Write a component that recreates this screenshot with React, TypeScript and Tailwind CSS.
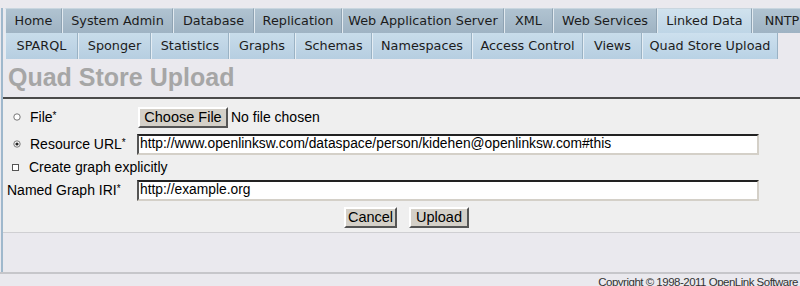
const topTabs = [
  { label: "Home", w: 57 },
  { label: "System Admin", w: 111 },
  { label: "Database", w: 81 },
  { label: "Replication", w: 88 },
  { label: "Web Application Server", w: 162 },
  { label: "XML", w: 49 },
  { label: "Web Services", w: 104 },
  { label: "Linked Data", w: 95, active: true },
  { label: "NNTP", w: 60 },
];

const subTabs = [
  { label: "SPARQL", w: 73 },
  { label: "Sponger", w: 73 },
  { label: "Statistics", w: 78 },
  { label: "Graphs", w: 66 },
  { label: "Schemas", w: 77 },
  { label: "Namespaces", w: 100 },
  { label: "Access Control", w: 111 },
  { label: "Views", w: 59 },
  { label: "Quad Store Upload", w: 136, active: true },
];

function Radio({ checked }: { checked?: boolean }) {
  return (
    <svg width="8" height="8" viewBox="0 0 8 8" className="shrink-0">
      <circle cx="4" cy="4" r="3.2" fill="#fff" stroke="#777" strokeWidth="1" />
      {checked && <circle cx="4" cy="4" r="1.6" fill="#222" />}
    </svg>
  );
}

function Field({ value }: { value: string }) {
  return (
    <div className="flex h-[21px] w-[622px] items-center border-2 border-t-[#222] border-l-[#555] border-r-[#d4d0c8] border-b-[#d4d0c8] bg-white px-[1px] text-[13.8px] leading-none text-black">
      {value}
    </div>
  );
}

function Btn({ label, w }: { label: string; w: number }) {
  return (
    <div
      style={{ width: w }}
      className="flex h-[21px] items-center justify-center border-2 border-t-white border-l-white border-r-[#555] border-b-[#555] bg-[#d4d0c8] text-[14.5px] leading-none text-black"
    >
      {label}
    </div>
  );
}

export default function App() {
  return (
    <div className="h-[286px] w-[800px] overflow-hidden bg-[#eae9ee] pt-2 font-['Liberation_Sans',Arial,sans-serif]">
      <div className="ml-px h-[264px] border-l-2 border-[#9fb8cc]">
        <div className="flex h-[25px] pl-[2px] font-['DejaVu_Sans',Verdana,sans-serif] text-[12.8px] text-[#1c1c1c]">
          {topTabs.map((t) => (
            <div
              key={t.label}
              style={{ width: t.w }}
              className={`flex shrink-0 items-center justify-center border-l border-r border-t border-l-[#e2eaf0] border-r-[#8fa3b3] border-t-[#c9d6df] ${
                t.active
                  ? "bg-gradient-to-b from-[#d0e2ee] to-[#bed5e6]"
                  : "bg-gradient-to-b from-[#b0c3d1] to-[#9fb3c3]"
              }`}
            >
              {t.label}
            </div>
          ))}
        </div>
        <div className="flex h-[26px] pl-[2px] font-['DejaVu_Sans',Verdana,sans-serif] text-[12.8px] text-[#1c1c1c]">
          {subTabs.map((t) => (
            <div
              key={t.label}
              style={{ width: t.w }}
              className={`flex shrink-0 items-center justify-center border-l border-r border-l-[#e4edf4] border-r-[#9ab2c4] ${
                t.active
                  ? "bg-gradient-to-b from-[#cde0ee] to-[#b9d2e5]"
                  : "bg-gradient-to-b from-[#c8dcea] to-[#b6cee1]"
              }`}
            >
              {t.label}
            </div>
          ))}
        </div>
        <div className="flex h-[38px] items-center pl-[5px] text-[25px] font-bold text-[#a6a6a6]">
          Quad Store Upload
        </div>
        <div className="h-[2px] bg-[#4a4a4a]" />
        <div className="border-b border-[#cfcfd2] bg-[#efefef] pt-[7px] pb-[4px] text-[14px] leading-none text-black">
          <div className="flex h-[22px] items-center">
            <div className="flex w-[135px] items-center gap-[9px] pl-[10px]">
              <Radio />
              <span>
                File<span className="relative -top-[3px] text-[10px]">*</span>
              </span>
            </div>
            <Btn label="Choose File" w={90} />
            <span className="ml-[3px]">No file chosen</span>
          </div>
          <div className="mt-[5px] flex h-[22px] items-center">
            <div className="flex w-[134px] items-center gap-[9px] pl-[10px]">
              <Radio checked />
              <span>
                Resource URL<span className="relative -top-[3px] text-[10px]">*</span>
              </span>
            </div>
            <Field value="http://www.openlinksw.com/dataspace/person/kidehen@openlinksw.com#this" />
          </div>
          <div className="flex h-[24px] items-center gap-[10px] pl-[9px]">
            <span className="h-[7px] w-[7px] border border-[#555] bg-white" />
            <span>Create graph explicitly</span>
          </div>
          <div className="flex h-[22px] items-center">
            <div className="w-[134px] pl-[4px]">
              Named Graph IRI<span className="relative -top-[3px] text-[10px]">*</span>
            </div>
            <Field value="http://example.org" />
          </div>
          <div className="mt-[6px] flex justify-center gap-[12px] pl-[10px]">
            <Btn label="Cancel" w={53} />
            <Btn label="Upload" w={60} />
          </div>
        </div>
      </div>
      <div className="flex justify-end border-t-2 border-[#c6c6ca] pr-[2px] pt-[3px] text-[11.5px] leading-none tracking-[-0.5px] text-[#333]">
        Copyright © 1998-2011 OpenLink Software
      </div>
    </div>
  );
}
